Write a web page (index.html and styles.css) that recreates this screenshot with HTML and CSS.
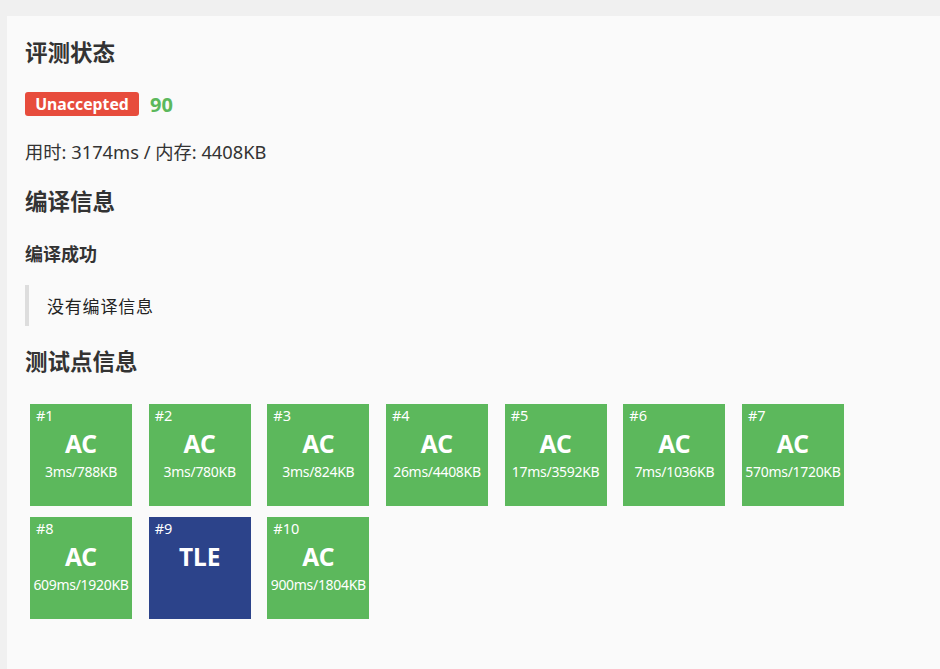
FILE: index.html
```html
<!DOCTYPE html>
<html lang="zh-CN">
<head>
<meta charset="utf-8">
<title>评测状态</title>
<link rel="stylesheet" href="styles.css">
</head>
<body>
<div class="panel">
  <h2 class="title first">评测状态</h2>
  <div class="status-row">
    <span class="badge">Unaccepted</span>
    <span class="score">90</span>
  </div>
  <p class="usage">用时: 3174ms / 内存: 4408KB</p>
  <h2 class="title">编译信息</h2>
  <h4 class="subtitle">编译成功</h4>
  <blockquote class="quote">没有编译信息</blockquote>
  <h2 class="title">测试点信息</h2>
  <div class="cases">
    <div class="case ac"><span class="num">#1</span><span class="res">AC</span><span class="info">3ms/788KB</span></div>
    <div class="case ac"><span class="num">#2</span><span class="res">AC</span><span class="info">3ms/780KB</span></div>
    <div class="case ac"><span class="num">#3</span><span class="res">AC</span><span class="info">3ms/824KB</span></div>
    <div class="case ac"><span class="num">#4</span><span class="res">AC</span><span class="info">26ms/4408KB</span></div>
    <div class="case ac"><span class="num">#5</span><span class="res">AC</span><span class="info">17ms/3592KB</span></div>
    <div class="case ac"><span class="num">#6</span><span class="res">AC</span><span class="info">7ms/1036KB</span></div>
    <div class="case ac"><span class="num">#7</span><span class="res">AC</span><span class="info">570ms/1720KB</span></div>
    <div class="case ac"><span class="num">#8</span><span class="res">AC</span><span class="info">609ms/1920KB</span></div>
    <div class="case tle"><span class="num">#9</span><span class="res">TLE</span><span class="info"></span></div>
    <div class="case ac"><span class="num">#10</span><span class="res">AC</span><span class="info">900ms/1804KB</span></div>
  </div>
</div>
</body>
</html>
```
FILE: styles.css
```css
html, body {
  margin: 0;
  padding: 0;
  height: 100%;
}
body {
  background: #f0f0f0;
  padding: 16px 0 0 7px;
  box-sizing: border-box;
  font-family: "Noto Sans", "Noto Sans CJK SC", sans-serif;
  color: #333;
  overflow: hidden;
}
.panel {
  background: #fafafa;
  min-height: 100%;
  padding: 22px 18px 18px 18px;
  box-sizing: border-box;
}
.title {
  font-size: 22.5px;
  line-height: 30px;
  font-weight: bold;
  margin: 23px 0 0 0;
}
.title.first {
  margin-top: 0;
}
.status-row {
  display: flex;
  align-items: center;
  gap: 11px;
  margin-top: 24px;
  height: 24px;
}
.badge {
  display: inline-flex;
  align-items: center;
  justify-content: center;
  background: #e74c3c;
  color: #fff;
  font-weight: bold;
  font-size: 15.8px;
  height: 24px;
  width: 114px;
  border-radius: 3px;
}
.score {
  color: #5cb85c;
  font-weight: bold;
  font-size: 20px;
}
.usage {
  font-size: 18.3px;
  line-height: 24px;
  margin: 24px 0 0 0;
}
.subtitle {
  font-size: 18px;
  line-height: 24px;
  font-weight: bold;
  margin: 25px 0 0 0;
}
.quote {
  margin: 19px 0 0 0;
  border-left: 4px solid #ddd;
  padding: 0 0 0 18px;
  height: 41px;
  display: flex;
  align-items: center;
  font-family: "Noto Sans CJK SC", serif;
  font-size: 17px;
  letter-spacing: 0.8px;
  font-weight: 400;
  color: #222;
}
.quote + .title {
  margin-top: 21px;
}
.cases {
  display: flex;
  flex-wrap: wrap;
  column-gap: 16.67px;
  row-gap: 11px;
  margin: 27px 0 0 5px;
  width: 830px;
}
.case {
  width: 102px;
  height: 102px;
  color: #fff;
  display: flex;
  flex-direction: column;
  align-items: center;
  position: relative;
  box-sizing: border-box;
  padding-top: 24px;
}
.case.ac {
  background: #5cb85c;
}
.case.tle {
  background: #2c438a;
}
.num {
  position: absolute;
  left: 6px;
  top: 2px;
  font-size: 14.5px;
  line-height: 18px;
}
.res {
  font-size: 24.5px;
  font-weight: bold;
  line-height: 32px;
}
.info {
  font-size: 14px;
  line-height: 20px;
  margin-top: 2px;
  white-space: nowrap;
  letter-spacing: -0.3px;
}
```
